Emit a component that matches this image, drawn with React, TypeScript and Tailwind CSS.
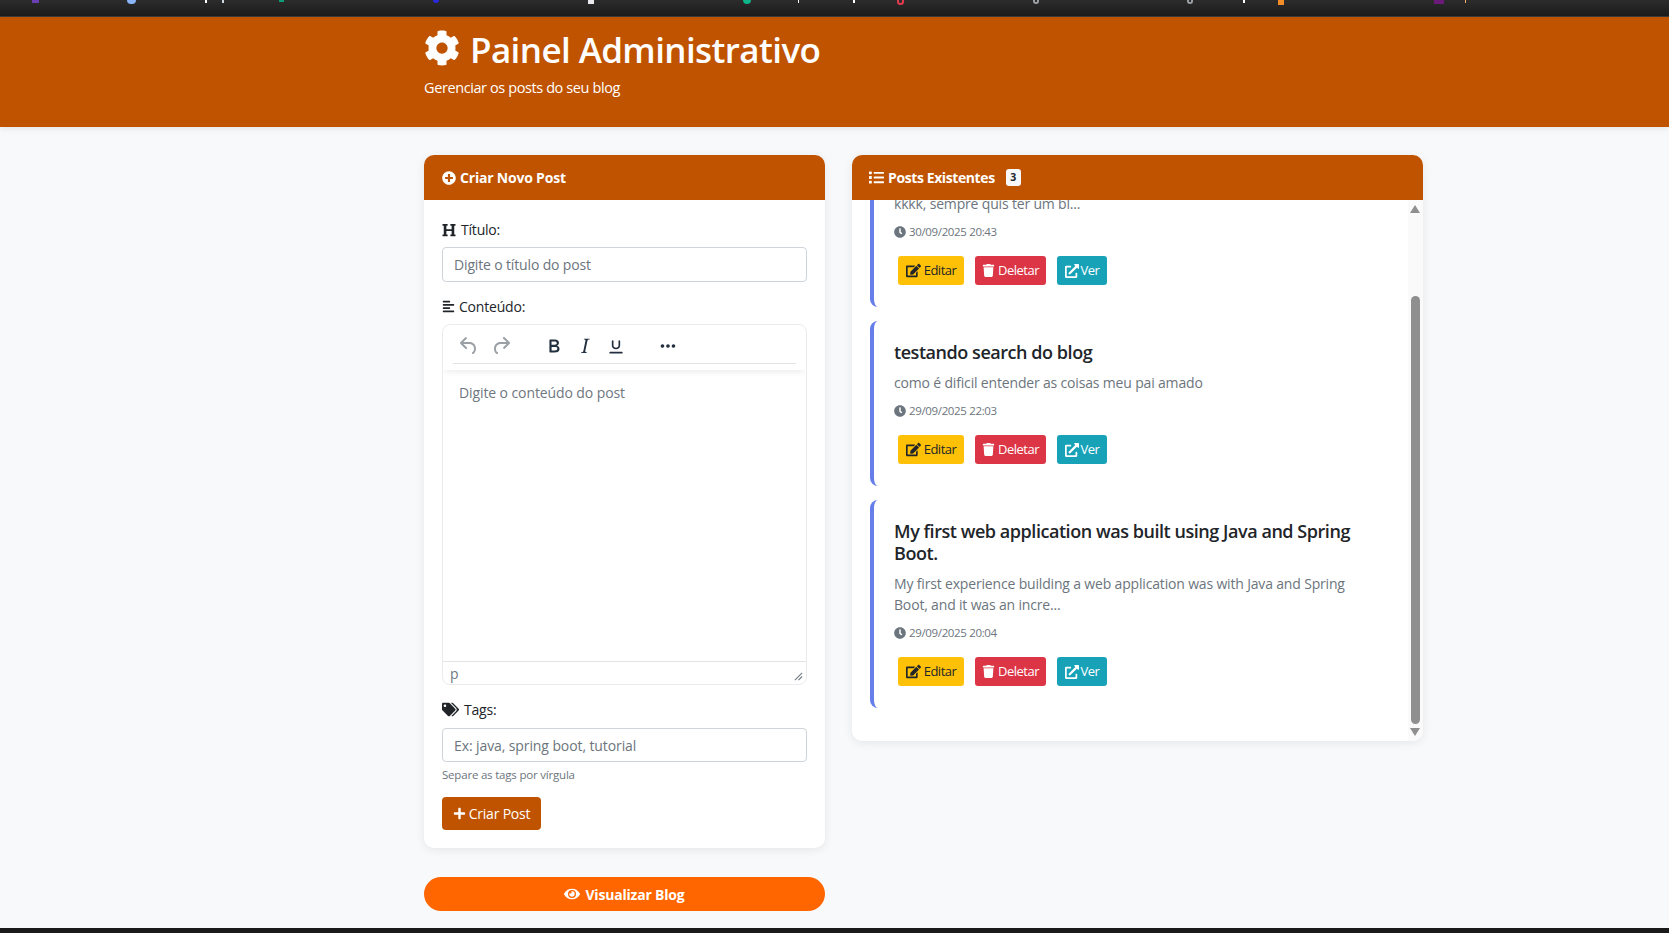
import React from 'react'
import {
  FaAlignLeft,
  FaClock,
  FaCog,
  FaEdit,
  FaExternalLinkAlt,
  FaEye,
  FaHeading,
  FaList,
  FaPlus,
  FaPlusCircle,
  FaTags,
  FaTrash,
} from 'react-icons/fa'

const posts = [
  {
    id: 1,
    title: '',
    excerpt: 'kkkk, sempre quis ter um bl...',
    date: '30/09/2025 20:43',
  },
  {
    id: 2,
    title: 'testando search do blog',
    excerpt: 'como é dificil entender as coisas meu pai amado',
    date: '29/09/2025 22:03',
  },
  {
    id: 3,
    title: 'My first web application was built using Java and Spring Boot.',
    excerpt: 'My first experience building a web application was with Java and Spring Boot, and it was an incre...',
    date: '29/09/2025 20:04',
  },
]

const PostActions = () => (
  <div className="flex pl-[4px]">
    <button className="flex h-[29px] w-[66px] items-center justify-center gap-[3px] rounded-[3px] bg-[#ffc107] text-[13px] tracking-[-0.5px] text-[#212529]">
      <FaEdit className="size-[15px]" /> Editar
    </button>
    <button className="ml-[11px] flex h-[29px] w-[71px] items-center justify-center gap-[3px] rounded-[3px] bg-[#dc3545] text-[13px] tracking-[-0.5px] text-white">
      <FaTrash className="size-[13px]" /> Deletar
    </button>
    <button className="ml-[11px] flex h-[29px] w-[50px] items-center justify-center gap-[2px] rounded-[3px] bg-[#17a2b8] text-[13px] tracking-[-0.5px] text-white">
      <FaExternalLinkAlt className="size-[14px]" /> Ver
    </button>
  </div>
)

const EditorToolbar = () => (
  <div className="relative h-[45px] shadow-[0_4px_6px_-2px_rgba(0,0,0,0.08)]">
    <div className="mx-[10px] flex h-[39px] items-center border-b border-[#e3e3e3] pt-[4px] pl-[4px]">
      <svg viewBox="0 0 24 24" className="size-[24px] fill-[#9aa0a6]">
        <path d="M6.4 8H12c3.7 0 6.2 2 6.8 5.1.6 2.7-.4 5.6-2.3 6.8a1 1 0 0 1-1-1.8c1.1-.6 1.8-2.7 1.4-4.6-.5-2.1-2.1-3.5-4.9-3.5H6.4l3.3 3.3a1 1 0 1 1-1.4 1.4l-5-5a1 1 0 0 1 0-1.4l5-5a1 1 0 0 1 1.4 1.4L6.4 8Z" />
      </svg>
      <svg viewBox="0 0 24 24" className="ml-[8px] size-[24px] fill-[#9aa0a6]">
        <path d="M17.6 10H12c-2.8 0-4.4 1.4-4.9 3.5-.4 2 .3 4 1.4 4.6a1 1 0 1 1-1 1.8c-2-1.2-2.9-4.1-2.3-6.8.6-3 3-5.1 6.8-5.1h5.6l-3.3-3.3a1 1 0 1 1 1.4-1.4l5 5a1 1 0 0 1 0 1.4l-5 5a1 1 0 0 1-1.4-1.4l3.3-3.3Z" />
      </svg>
      <svg viewBox="0 0 24 24" className="ml-[30px] size-[22px] fill-[#222f3e]">
        <path d="M7.8 19c-.3 0-.5 0-.6-.2l-.2-.5V5.7c0-.2 0-.4.2-.5l.6-.2h5c1.5 0 2.7.3 3.5 1 .7.6 1.1 1.4 1.1 2.5a3 3 0 0 1-.6 1.9c-.4.6-1 1-1.6 1.2.4.1.9.3 1.3.6s.8.7 1 1.2c.4.4.5 1 .5 1.6 0 1.3-.4 2.3-1.3 3-.8.7-2.1 1-3.8 1H7.8Zm5-8.3c.6 0 1.2-.1 1.6-.5.4-.3.6-.7.6-1.3 0-1.1-.8-1.7-2.3-1.7H9.3v3.5h3.4Zm.5 6c.7 0 1.3-.1 1.7-.4.4-.4.6-.9.6-1.5s-.2-1-.7-1.4c-.4-.3-1-.4-2-.4H9.4v3.8h4Z" />
      </svg>
      <svg viewBox="0 0 24 24" className="ml-[8px] size-[24px] fill-[#222f3e]">
        <path d="m16.7 4.7-.1.9h-.3c-.6 0-1 0-1.4.3-.3.3-.4.6-.5 1.1l-2.1 9.8v.6c0 .5.4.8 1.4.8h.2l-.2.8H8l.2-.8h.2c1.1 0 1.8-.5 2-1.5l2-9.8.1-.5c0-.6-.4-.8-1.4-.8h-.3l.2-.9h5.8Z" />
      </svg>
      <svg viewBox="0 0 24 24" className="ml-[9px] size-[20px] fill-[#222f3e]">
        <path d="M16 5c.6 0 1 .4 1 1v5.5a4 4 0 0 1-.4 1.8l-.2.3a4 4 0 0 1-.5.7 5.6 5.6 0 0 1-7.8 0c-.2-.2-.4-.4-.5-.7l-.2-.3a4 4 0 0 1-.4-1.8V6c0-.6.4-1 1-1s1 .4 1 1v5.5c0 .3 0 .6.2.9l.2.3.3.4a3.6 3.6 0 0 0 4.6 0l.3-.4.2-.3c.2-.3.2-.6.2-.9V6c0-.6.4-1 1-1ZM5 19h14a1 1 0 0 1 0 2H5a1 1 0 0 1 0-2Z" />
      </svg>
      <svg viewBox="0 0 24 24" className="ml-[31px] size-[22px] fill-[#222f3e]">
        <path d="M6 10a2 2 0 0 0-2 2c0 1.1.9 2 2 2a2 2 0 0 0 2-2 2 2 0 0 0-2-2Zm12 0a2 2 0 0 0-2 2c0 1.1.9 2 2 2a2 2 0 0 0 2-2 2 2 0 0 0-2-2Zm-6 0a2 2 0 0 0-2 2c0 1.1.9 2 2 2a2 2 0 0 0 2-2 2 2 0 0 0-2-2Z" />
      </svg>
    </div>
  </div>
)

export default function App() {
  return (
    <div className="flex h-[933px] flex-col overflow-hidden bg-[#f8f9fa] font-['Open_Sans',sans-serif] text-[14px] text-[#212529]">
      {/* browser chrome peeking in at the top */}
      <div className="flex h-[17px] shrink-0 items-start border-b border-[#3a3a3a] bg-gradient-to-b from-[#2c2c2c] to-[#1b1b1b]">
        <span className="ml-[32px] h-[3px] w-[7px] bg-[#6a3fb5]" />
        <span className="ml-[88px] h-[4px] w-[9px] rounded-b-full bg-[#8ab4f8]" />
        <span className="ml-[69px] h-[3px] w-[2px] bg-white" />
        <span className="ml-[15px] h-[3px] w-[2px] bg-[#cfd8dc]" />
        <span className="ml-[55px] h-[2px] w-[5px] bg-[#0f9d77]" />
        <span className="ml-[149px] h-[3px] w-[6px] rounded-b-full bg-[#2a2ae0]" />
        <span className="ml-[149px] h-[4px] w-[6px] bg-[#e8eaed]" />
        <span className="ml-[149px] h-[4px] w-[8px] rounded-b-full bg-[#10b58a]" />
        <span className="ml-[47px] h-[3px] w-[1px] bg-white" />
        <span className="ml-[54px] h-[3px] w-[2px] bg-white" />
        <span className="ml-[42px] h-[5px] w-[7px] rounded-b-full border-x-2 border-b-2 border-[#e53950]" />
        <span className="ml-[129px] h-[4px] w-[6px] rounded-b-full border-x-2 border-b-2 border-[#9aa0a6]" />
        <span className="ml-[148px] h-[4px] w-[6px] rounded-b-full border-x-2 border-b-2 border-[#9aa0a6]" />
        <span className="ml-[50px] h-[3px] w-[2px] bg-white" />
        <span className="ml-[33px] h-[5px] w-[6px] bg-[#f28c28]" />
        <span className="ml-[150px] h-[4px] w-[10px] bg-[#6a1b7a]" />
        <span className="ml-[21px] h-[3px] w-[1px] bg-[#f2b36b]" />
      </div>

      <header className="h-[110px] shrink-0 bg-[#c05300] pl-[424px] pt-[11px] text-white shadow-[0_2px_6px_rgba(0,0,0,0.08)]">
        <h1 className="flex h-[42px] items-center gap-[10px] text-[35px] font-semibold leading-none tracking-[-0.6px]">
          <FaCog className="-mt-[3px] size-[36px]" /> Painel Administrativo
        </h1>
        <p className="mt-[7px] text-[14.5px] leading-[22px] tracking-[-0.4px]">Gerenciar os posts do seu blog</p>
      </header>

      <main className="flex flex-1 items-start gap-[27px] pl-[424px] pt-[28px]">
        <div className="flex w-[401px] flex-col">
          <section className="h-[693px] overflow-hidden rounded-[10px] bg-white shadow-[0_2px_10px_rgba(0,0,0,0.08)]">
            <div className="flex h-[45px] items-center gap-[4px] bg-[#c05300] pl-[18px] text-[14px] font-bold tracking-[-0.2px] text-white">
              <FaPlusCircle className="size-[14px]" /> Criar Novo Post
            </div>
            <div className="px-[18px] pt-[19px]">
              <label className="flex h-[21px] items-center gap-[5px] tracking-[-0.2px]">
                <FaHeading className="size-[14px]" /> Título:
              </label>
              <input
                placeholder="Digite o título do post"
                className="mt-[7px] block h-[35px] w-full rounded-[4px] border border-[#ced4da] bg-white px-[11px] text-[14px] tracking-[-0.15px] placeholder:text-[#6c757d]"
              />
              <label className="mt-[14px] flex h-[21px] items-center gap-[4px] tracking-[-0.2px]">
                <FaAlignLeft className="size-[13px]" /> Conteúdo:
              </label>
              <div className="mt-[7px] flex h-[361px] flex-col overflow-hidden rounded-[8px] border border-[#e9ecef]">
                <EditorToolbar />
                <div className="flex-1 pl-[16px] pt-[12px] text-[14px] leading-[21px] tracking-[-0.1px] text-[#6f7780]">
                  Digite o conteúdo do post
                </div>
                <div className="relative flex h-[23px] items-center border-t border-[#e3e3e3] pl-[7px] text-[14px] text-[#6f7780]">
                  p
                  <svg viewBox="0 0 10 10" className="absolute bottom-[3px] right-[3px] size-[9px] stroke-[#6f7780]">
                    <path d="M1 9 9 1M5 9l4-4" fill="none" strokeWidth="1.2" />
                  </svg>
                </div>
              </div>
              <label className="mt-[14px] flex h-[21px] items-center gap-[5px] tracking-[-0.2px]">
                <FaTags className="size-[17px]" /> Tags:
              </label>
              <input
                placeholder="Ex: java, spring boot, tutorial"
                className="mt-[8px] block h-[34px] w-full rounded-[4px] border border-[#ced4da] bg-white px-[11px] text-[14px] tracking-[-0.1px] placeholder:text-[#6c757d]"
              />
              <p className="mt-[4px] text-[11.5px] leading-[17px] tracking-[-0.2px] text-[#6c757d]">Separe as tags por vírgula</p>
              <button className="mt-[14px] flex h-[33px] w-[99px] items-center justify-center gap-[3px] rounded-[4px] bg-[#c05300] text-[14px] tracking-[-0.2px] text-white">
                <FaPlus className="size-[13px]" /> Criar Post
              </button>
            </div>
          </section>
          <button className="mt-[29px] flex h-[34px] items-center justify-center gap-[5px] rounded-full bg-[#ff6600] text-[14px] font-bold tracking-[-0.2px] text-white">
            <FaEye className="size-[16px]" /> Visualizar Blog
          </button>
        </div>

        <section className="flex h-[586px] w-[571px] flex-col overflow-hidden rounded-[10px] bg-white shadow-[0_2px_10px_rgba(0,0,0,0.08)]">
          <div className="flex h-[45px] shrink-0 items-center bg-[#c05300] pl-[17px] text-[14px] font-bold tracking-[-0.4px] text-white">
            <FaList className="mr-[4px] size-[15px]" /> Posts Existentes
            <span className="ml-[11px] flex h-[17px] w-[15px] items-center justify-center rounded-[3px] bg-[#f8f9fa] text-[10.5px] font-bold tracking-normal text-[#212529]">
              3
            </span>
          </div>
          <div className="flex min-h-0 flex-1">
            <div className="min-w-0 flex-1 overflow-hidden pl-[18px]">
              {/* list is scrolled a little past the first post's title */}
              <div className="-mt-[27px] flex w-[520px] flex-col gap-[14px]">
                {posts.map((post) => (
                  <article
                    key={post.id}
                    className="rounded-[8px] border-l-[4px] border-[#667eea] pl-[20px] pt-[20px]"
                  >
                    {post.title && (
                      <h5 className="mb-[9px] w-[465px] text-[18px] font-semibold leading-[22px] tracking-[-0.45px] text-[#212529]">
                        {post.title}
                      </h5>
                    )}
                    <p className="w-[465px] text-[14px] leading-[21px] tracking-[-0.17px] text-[#6c757d]">{post.excerpt}</p>
                    <div className="mt-[8px] flex h-[20px] items-center gap-[3px] text-[11.5px] tracking-[-0.35px] text-[#6c757d]">
                      <FaClock className="size-[12px]" /> {post.date}
                    </div>
                    <div className="mt-[14px] pb-[22px]">
                      <PostActions />
                    </div>
                  </article>
                ))}
              </div>
            </div>
            <div className="flex w-[15px] shrink-0 flex-col items-center bg-[#fafafa] pt-[5px] pr-[1px]">
              <svg viewBox="0 0 10 8" className="h-[8px] w-[10px] fill-[#8f8f8f]">
                <path d="M5 0 10 8H0Z" />
              </svg>
              <div className="mt-[83px] h-[428px] w-[9px] rounded-full bg-[#8f8f8f]" />
              <svg viewBox="0 0 10 8" className="mt-[4px] h-[8px] w-[10px] fill-[#8f8f8f]">
                <path d="M5 8 0 0H10Z" />
              </svg>
            </div>
          </div>
        </section>
      </main>

      <div className="h-[5px] shrink-0 bg-[#1a1a1a]" />
    </div>
  )
}
